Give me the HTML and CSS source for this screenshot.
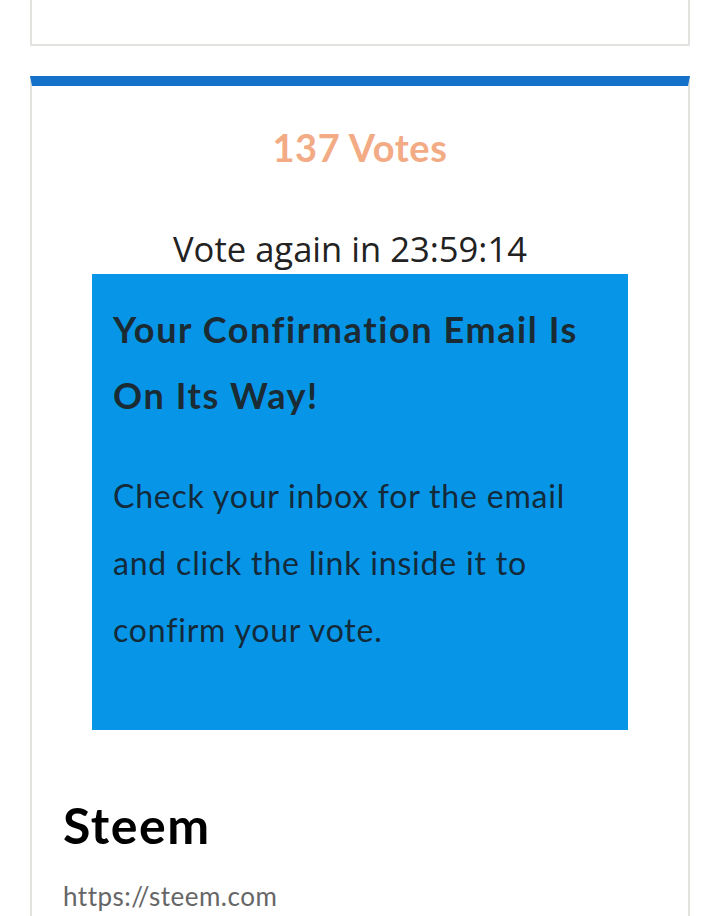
FILE: index.html
```html
<!DOCTYPE html>
<html>
<head>
<meta charset="utf-8">
<link rel="stylesheet" href="styles.css">
</head>
<body>
<div class="card-prev"></div>
<div class="card">
  <div class="votes">137 Votes</div>
  <div class="again">Vote again in 23:59:14</div>
  <div class="notice">
    <h2 class="notice-title">Your Confirmation Email Is On Its Way!</h2>
    <p class="notice-text">Check your inbox for the email and click the link inside it to confirm your vote.</p>
  </div>
  <div class="site">
    <h1 class="site-name">Steem</h1>
    <div class="site-url">https://steem.com</div>
  </div>
</div>
</body>
</html>
```
FILE: styles.css
```css
html, body {
  margin: 0;
  padding: 0;
  background: #ffffff;
}
body {
  font-family: "Lato", "Liberation Sans", sans-serif;
  overflow: hidden;
  height: 916px;
}
.card-prev {
  margin: 0 30px;
  height: 44px;
  border: 2px solid #e2e2de;
  border-top: none;
}
.card {
  margin: 30px 30px 0;
  border: 2px solid #e2e2de;
  border-top: 10px solid #1473c8;
  height: 900px;
}
.votes {
  text-align: center;
  font-weight: 700;
  font-size: 38px;
  letter-spacing: 0.6px;
  color: #f2ab84;
  margin-top: 36px;
  line-height: 50px;
}
.again {
  text-align: center;
  font-family: "Open Sans", sans-serif;
  font-size: 34.6px;
  color: #222222;
  margin-top: 52px;
  line-height: 50px;
  padding-right: 20px;
}
.notice {
  margin: 0 60px;
  background: #0796e7;
  padding: 22px 21px 60px;
  height: 456px;
  box-sizing: border-box;
}
.notice-title {
  margin: 0;
  font-size: 36px;
  font-weight: 700;
  line-height: 66px;
  color: #1b2b33;
  letter-spacing: 1.6px;
}
.notice-text {
  margin: 34px 0 0;
  font-size: 32px;
  font-weight: 400;
  line-height: 67px;
  color: #132a3a;
  letter-spacing: 0.8px;
}
.site {
  padding: 65px 31px 0;
}
.site-name {
  margin: 0;
  font-size: 50px;
  font-weight: 700;
  letter-spacing: 1.5px;
  color: #000;
  line-height: 60px;
}
.site-url {
  margin-top: 25px;
  font-size: 26px;
  letter-spacing: 0.5px;
  color: #666;
}
```
